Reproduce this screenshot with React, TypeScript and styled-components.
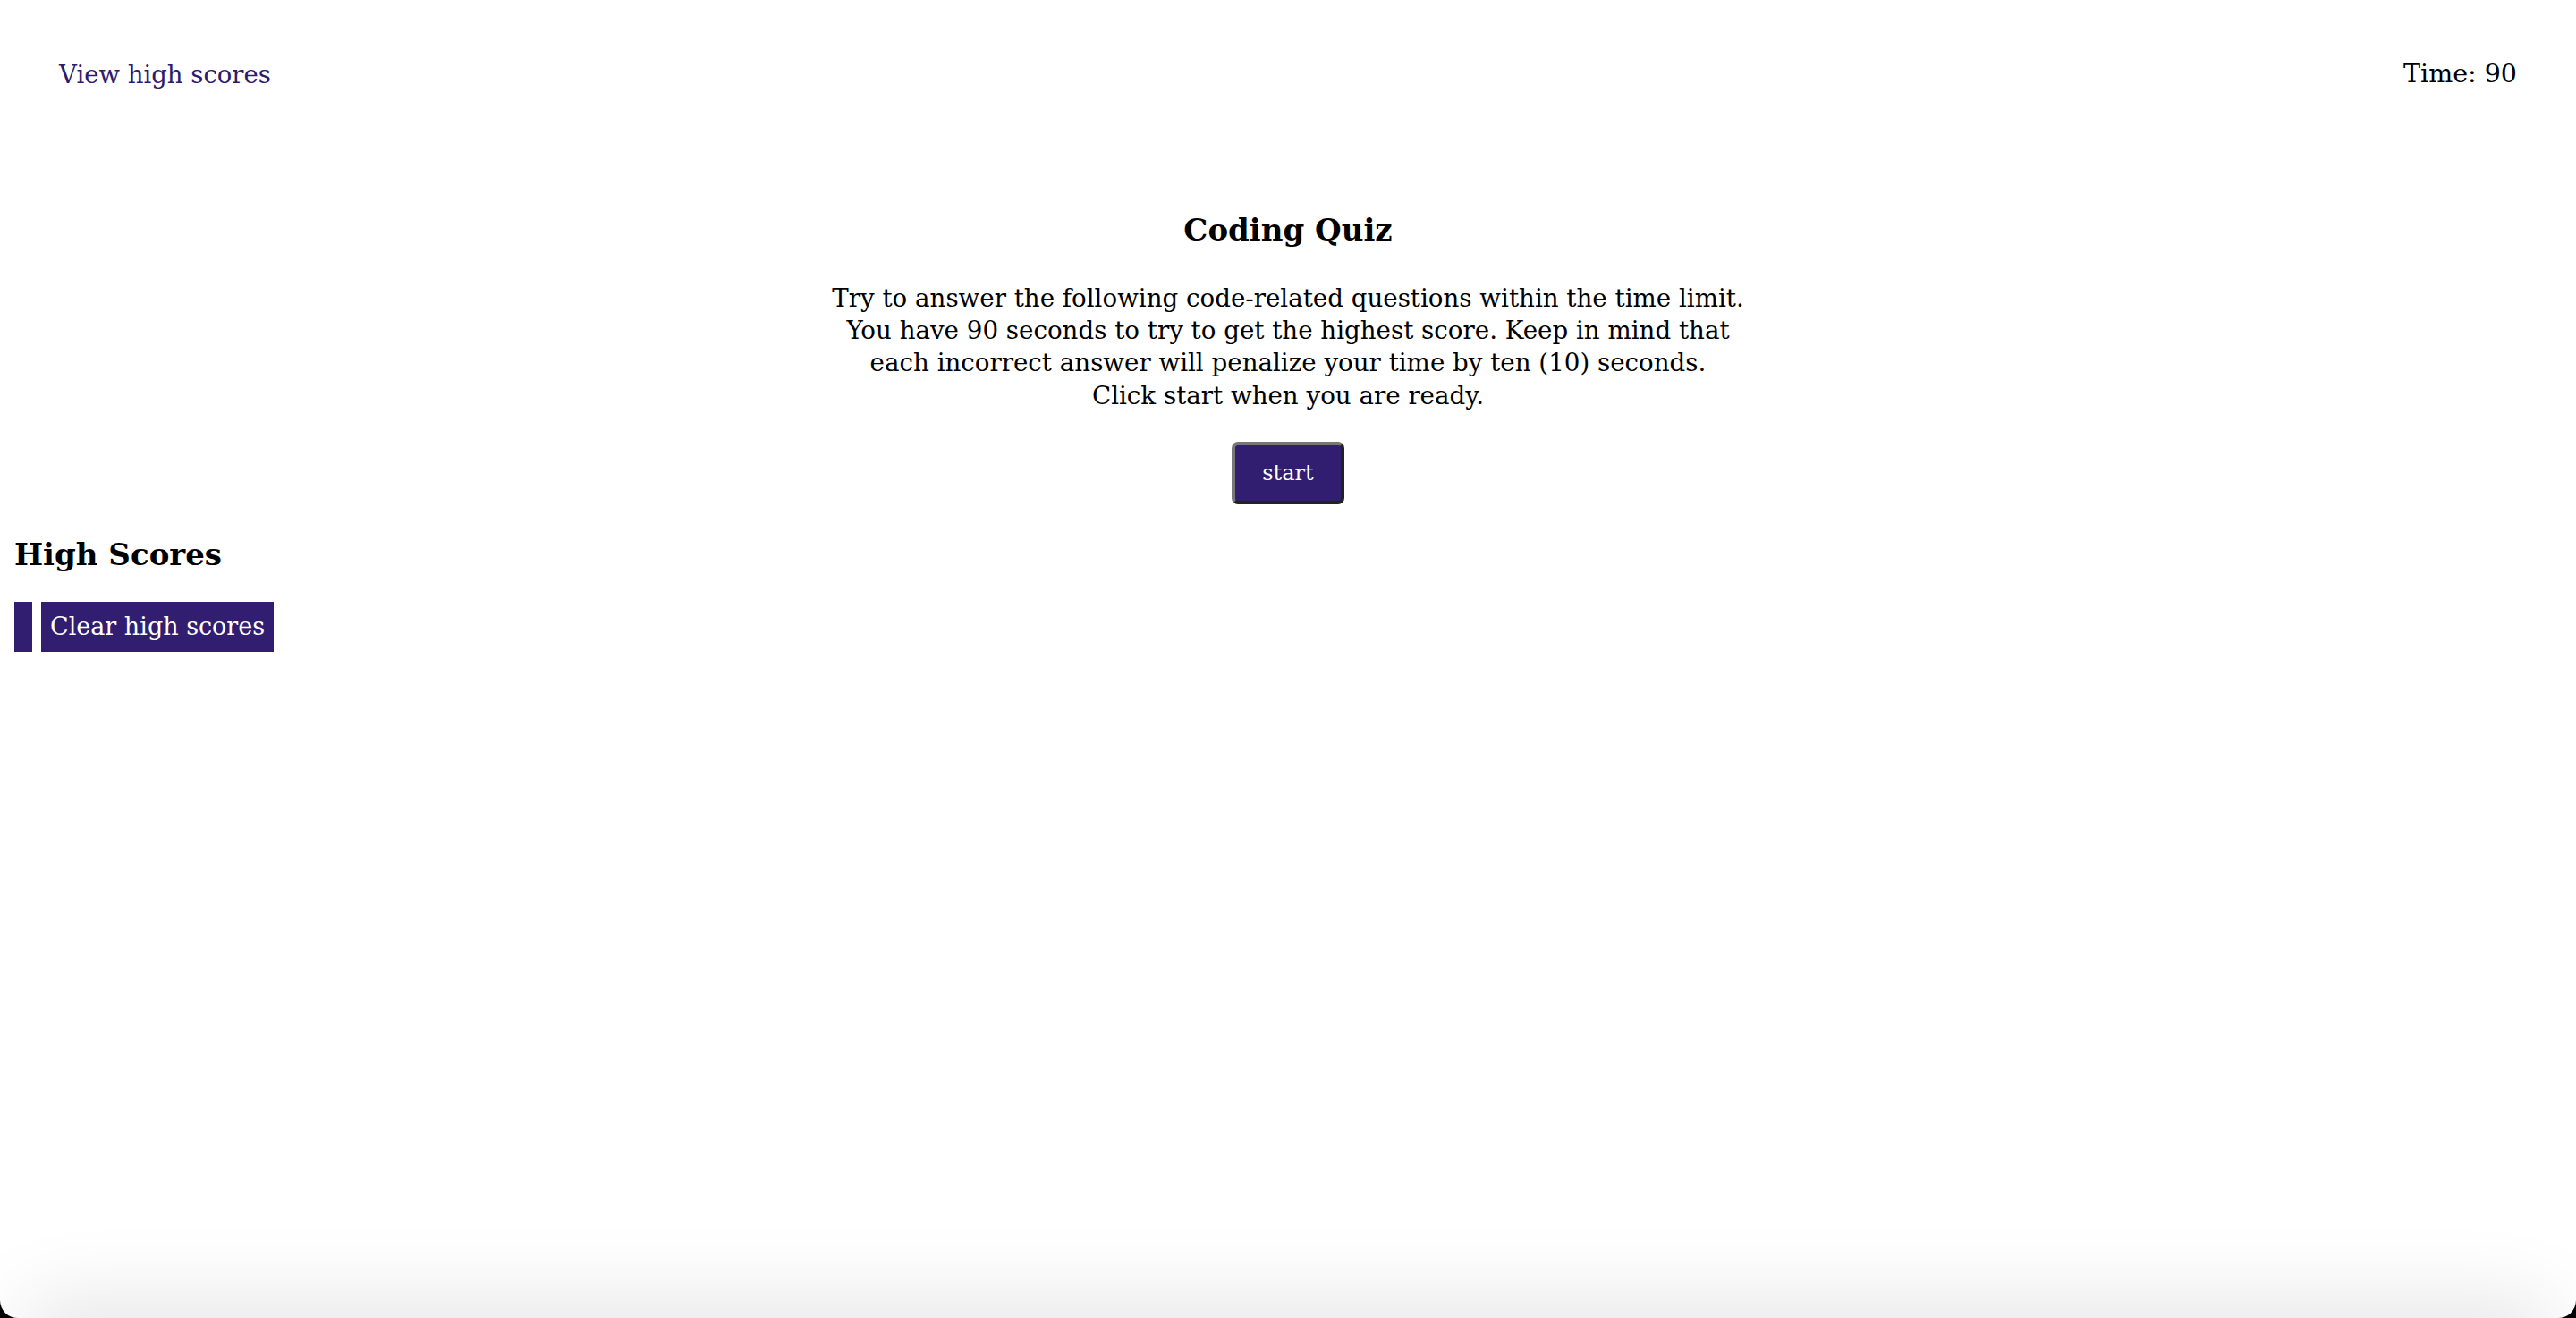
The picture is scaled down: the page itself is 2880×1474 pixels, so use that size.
import React from "react";
import styled, { createGlobalStyle } from "styled-components";

const GlobalStyle = createGlobalStyle`
  html {
    background: #000;
  }
  body {
    margin: 0;
    font-family: "DejaVu Serif", "Liberation Serif", serif;
    color: #000;
  }
`;

const Frame = styled.div`
  position: relative;
  min-height: 100vh;
  box-sizing: border-box;
  padding: 16px;
  background: #fff;
  border-bottom-left-radius: 20px;
  border-bottom-right-radius: 20px;
  overflow: hidden;
`;

const Header = styled.header`
  display: flex;
  justify-content: space-between;
  align-items: center;
  padding: 47px 50px 0 50px;
  line-height: 40px;
`;

const HeaderLink = styled.a`
  color: #2e1b6d;
  text-decoration: none;
  font-size: 27.5px;
`;

const Timer = styled.span`
  color: #000;
  font-size: 28.5px;
`;

const Intro = styled.section`
  display: flex;
  flex-direction: column;
  align-items: center;
  text-align: center;
  padding-top: 132px;
`;

const Title = styled.h2<{ $align?: string }>`
  margin: 0;
  font-size: 34px;
  line-height: 44px;
  font-weight: bold;
  text-align: ${(p) => p.$align || "center"};
`;

const Lead = styled.p`
  margin: 37px 0 0 0;
  font-size: 27.7px;
  line-height: 36.2px;
`;

const StartButton = styled.button`
  margin-top: 33px;
  background: #321e70;
  color: #fff;
  font-family: "DejaVu Serif", "Liberation Serif", serif;
  font-size: 24px;
  line-height: 30px;
  padding: 16px 30px 16px;
  border-width: 4px;
  border-style: solid;
  border-color: #777 #222 #222 #777;
  border-radius: 7px;
`;

const Scores = styled.section`
  display: flex;
  flex-direction: column;
  align-items: flex-start;
  gap: 31px;
  margin-top: 34px;
`;

const ScoreRow = styled.div`
  display: flex;
  align-items: stretch;
  gap: 10px;
`;

const ScoreList = styled.ol`
  margin: 0;
  padding: 10px;
  background: #321e70;
  list-style: none;
`;

const ClearButton = styled.button`
  margin: 0;
  border: none;
  background: #321e70;
  color: #fff;
  font-family: "DejaVu Serif", "Liberation Serif", serif;
  font-size: 27px;
  line-height: 36px;
  padding: 10px 10px;
`;

const BottomShade = styled.div`
  position: absolute;
  left: 50px;
  right: 50px;
  bottom: -100px;
  height: 100px;
  box-shadow: 0 0 90px 20px rgba(0, 0, 0, 0.1);
  pointer-events: none;
`;

export default function App() {
  return (
    <>
      <GlobalStyle />
      <Frame>
        <Header>
          <HeaderLink href="#">View high scores</HeaderLink>
          <Timer>Time: 90</Timer>
        </Header>
        <Intro>
          <Title>Coding Quiz</Title>
          <Lead>
            Try to answer the following code-related questions within the time limit.
            <br />
            You have 90 seconds to try to get the highest score. Keep in mind that
            <br />
            each incorrect answer will penalize your time by ten (10) seconds.
            <br />
            Click start when you are ready.
          </Lead>
          <StartButton>start</StartButton>
        </Intro>
        <Scores>
          <Title $align="left">High Scores</Title>
          <ScoreRow>
            <ScoreList />
            <ClearButton>Clear high scores</ClearButton>
          </ScoreRow>
        </Scores>
        <BottomShade />
      </Frame>
    </>
  );
}
